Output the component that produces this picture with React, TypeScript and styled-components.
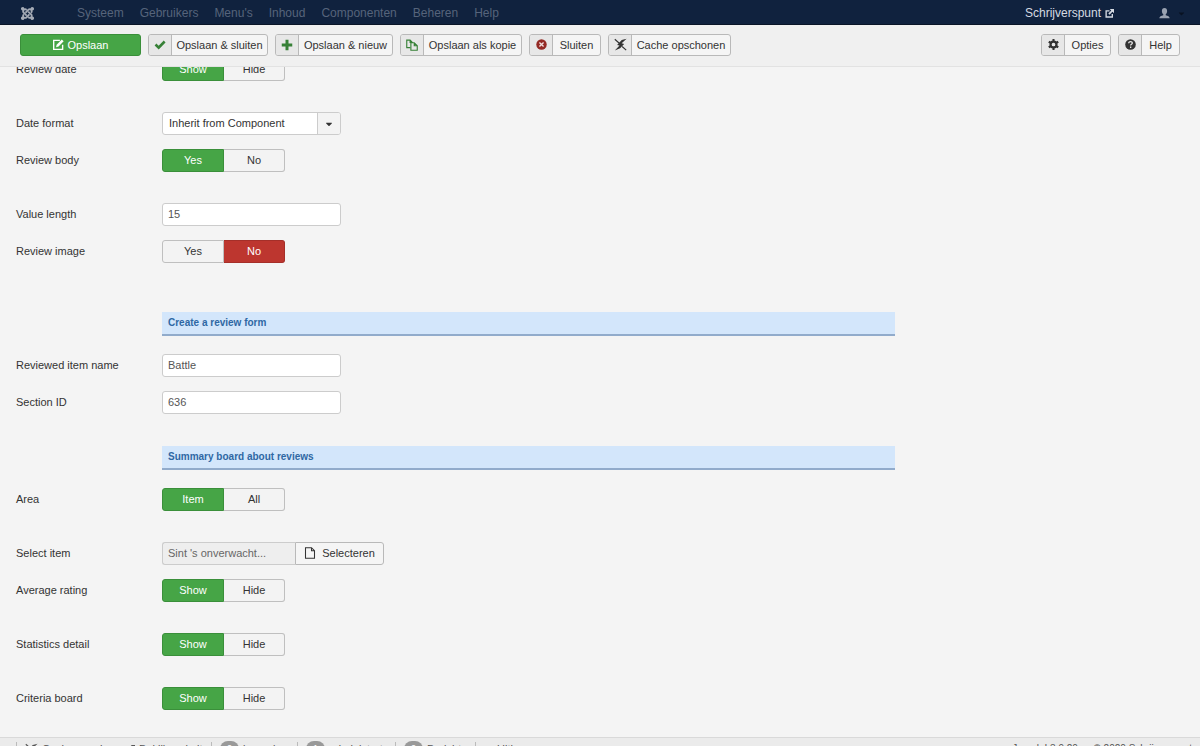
import React, { useId, useState } from "react";
import styled, { createGlobalStyle, css } from "styled-components";
import { FaCaretDown, FaJoomla, FaMinus } from "react-icons/fa";

const Global = createGlobalStyle`
  * { box-sizing: border-box; }
  html, body { margin: 0; height: 100%; overflow: hidden; background: #f4f4f4; }
  body, button, input, select {
    font-family: "Liberation Sans", Arial, sans-serif;
    font-size: 11px;
    line-height: 16px;
    color: #333;
  }
  a { color: inherit; text-decoration: none; }
  svg { flex: none; }
`;

const Navbar = styled.nav`
  position: relative;
  z-index: 2;
  display: flex;
  align-items: center;
  height: 25px;
  padding: 2px 14px 0 20px;
  background: #10223e;
  border-bottom: 1px solid #0a1527;
  color: #56647b;
  font-size: 12px;
`;

const Brand = styled.a`
  display: flex;
  width: 57px;
  color: #a4aab5;
`;

const Menu = styled.div`
  display: flex;
  flex: 1;
  gap: 16px;
`;

const SiteLink = styled.a`
  display: flex;
  align-items: center;
  gap: 4px;
  color: #d5dae2;
`;

const UserButton = styled.button`
  display: flex;
  align-items: center;
  gap: 7px;
  margin-left: 45px;
  padding: 0;
  border: 0;
  background: none;
  color: #98a1b0;
`;

const Toolbar = styled.div`
  position: relative;
  z-index: 1;
  display: flex;
  align-items: center;
  gap: 7px;
  height: 42px;
  padding: 0 20px 2px;
  background: #f0f0f0;
  border-bottom: 1px solid #e2e2e2;
`;

const Spacer = styled.div`
  flex: 1;
`;

const buttonBox = css`
  height: 22px;
  border: 1px solid #b9b9b9;
  border-radius: 3px;
  background: #f5f5f5;
  padding: 0;
`;

const ToolButton = styled.button<{ $width: number }>`
  ${buttonBox}
  display: flex;
  width: ${(p) => p.$width}px;
  overflow: hidden;
  white-space: nowrap;
`;

const ToolIcon = styled.span<{ $color: string }>`
  display: flex;
  align-items: center;
  justify-content: center;
  width: 23px;
  height: 20px;
  flex: none;
  color: ${(p) => p.$color};
  background: #e7e7e7;
  border-right: 1px solid #b9b9b9;
`;

const ToolText = styled.span`
  flex: 1;
  line-height: 20px;
  text-align: center;
`;

const SaveButton = styled.button`
  display: flex;
  align-items: center;
  justify-content: center;
  gap: 4px;
  width: 121px;
  height: 22px;
  padding: 0;
  border: 1px solid #3a8f3a;
  border-radius: 3px;
  background: #46a546;
  color: #fff;
`;

const Form = styled.form`
  display: flex;
  flex-direction: column;
  margin-top: -9px;
  padding: 0 16px;
`;

const Row = styled.div<{ $tall?: boolean }>`
  display: flex;
  align-items: center;
  height: 23px;
  margin-bottom: ${(p) => (p.$tall ? 31 : 14)}px;
`;

const labelStyle = css`
  width: 146px;
  padding-bottom: 2px;
  flex: none;
`;

const Label = styled.label`
  ${labelStyle}
`;

const GroupLabel = styled.span`
  ${labelStyle}
`;

const Heading = styled.h4`
  width: calc(63% - 3px);
  height: 24px;
  margin: 18px 0 18px 146px;
  padding: 0 6px;
  font-size: 10px;
  line-height: 22px;
  color: #2f68a4;
  background: #d3e6fb;
  border-bottom: 2px solid #91abcb;
`;

const TextInput = styled.input`
  width: 179px;
  height: 23px;
  padding: 0 5px 2px;
  border: 1px solid #ccc;
  border-radius: 3px;
  background: #fff;
  color: #555;
`;

const SelectBox = styled.div`
  position: relative;
  width: 179px;
  height: 23px;
`;

const Select = styled.select`
  appearance: none;
  width: 100%;
  height: 23px;
  padding: 0 28px 2px 6px;
  border: 1px solid #ccc;
  border-radius: 3px;
  background: #fff;
`;

const SelectArrow = styled.span`
  position: absolute;
  top: 1px;
  right: 1px;
  display: flex;
  align-items: center;
  justify-content: center;
  width: 23px;
  height: 21px;
  border-left: 1px solid #ccc;
  border-radius: 0 2px 2px 0;
  background: #f3f3f3;
  pointer-events: none;
`;

const Toggle = styled.div`
  display: grid;
  grid-template-columns: 62px 61px;
  height: 23px;
`;

const Option = styled.label<{ $tone: "off" | "yes" | "no" }>`
  display: flex;
  align-items: center;
  justify-content: center;
  padding-bottom: 2px;
  border: 1px solid #bfbfbf;
  background: #f3f3f3;
  &:first-child { border-radius: 3px 0 0 3px; }
  &:last-child { border-radius: 0 3px 3px 0; border-left-width: 0; }
  ${(p) => p.$tone === "yes" && css`background: #46a546; border-color: #3a8f3a; color: #fff;`}
  ${(p) => p.$tone === "no" && css`background: #bd362f; border-color: #a52f29; color: #fff;`}
`;

const HiddenRadio = styled.input`
  position: absolute;
  opacity: 0;
  width: 1px;
  height: 1px;
  margin: 0;
`;

const PickerInput = styled(TextInput)`
  width: 133px;
  border-radius: 3px 0 0 3px;
  border-right: 0;
  background: #eee;
  color: #666;
`;

const PickerButton = styled.button`
  ${buttonBox}
  display: flex;
  align-items: center;
  justify-content: center;
  gap: 6px;
  width: 89px;
  height: 23px;
  padding-bottom: 2px;
  border-radius: 0 3px 3px 0;
`;

const StatusBar = styled.footer`
  position: fixed;
  right: 0;
  bottom: -18px;
  left: 0;
  z-index: 1;
  display: flex;
  align-items: center;
  height: 27px;
  padding: 0 8px 4px 16px;
  background: #ebebeb;
  border-top: 1px solid #d9d9d9;
  color: #555;
  white-space: nowrap;
`;

const StatusItem = styled.a<{ $width: number; $plain?: boolean }>`
  display: flex;
  align-items: center;
  gap: 4px;
  width: ${(p) => p.$width}px;
  height: 14px;
  padding-left: 8px;
  border-left: 1px solid ${(p) => (p.$plain ? "transparent" : "#bbb")};
`;

const Badge = styled.span`
  width: 19px;
  height: 16px;
  border-radius: 8px;
  background: #999;
  color: #fff;
  font-size: 10px;
  line-height: 18px;
  text-align: center;
  flex: none;
`;

const Copyright = styled.span`
  font-size: 10px;
`;

const Glyph = ({ size, children }: { size: number; children: React.ReactNode }) => (
  <svg width={size} height={size} viewBox="0 0 16 16" fill="currentColor" aria-hidden="true">
    {children}
  </svg>
);

const EditIcon = () => (
  <Glyph size={11}>
    <path d="M10 2H1v13h13V8.5" fill="none" stroke="currentColor" strokeWidth="2" />
    <path d="M4.5 12l.8-3.8L12.8.7l2.7 2.7-7.4 7.5z" />
  </Glyph>
);
const CheckIcon = () => (
  <Glyph size={12}>
    <path d="M.8 8.6L3.2 6l3 3L13 2l2.4 2.500L6.300 14z" />
  </Glyph>
);
const PlusIcon = () => (
  <Glyph size={12}>
    <path d="M6 1h4v5h5v4h-5v5H6v-5H1V6h5z" />
  </Glyph>
);
const CopyIcon = () => (
  <Glyph size={12}>
    <path
      d="M5.500 11.500H1V1.500h4.500L8.500 4.500V5M5.500 1.500V4.500H8.500M6.500 5h4.500l4 4v6h-8.500zM11 5v4h4"
      fill="none"
      stroke="currentColor"
      strokeWidth="1.500"
    />
  </Glyph>
);
const CancelIcon = () => (
  <Glyph size={11}>
    <circle cx="8" cy="8" r="7.600" />
    <path d="M5 5l6 6M11 5l-6 6" stroke="#f0dede" strokeWidth="2" />
  </Glyph>
);
const CacheIcon = () => (
  <Glyph size={13}>
    <path d="M1 1.500l5.500 5M10 10.500l5 4.500" stroke="currentColor" strokeWidth="1.400" />
    <path d="M15.500 1L9.500 2.600 3.800 8.600l3 .6L1 15.500l6.500-2.800 5-5.400-3.100-.7z" />
  </Glyph>
);
const GearIcon = () => (
  <Glyph size={11}>
    <circle cx="8" cy="8" r="4.300" fill="none" stroke="currentColor" strokeWidth="3.200" />
    <path
      d="M8 0v3.500M8 12.500V16M1.100 4l3 1.800M11.900 10.200l3 1.800M14.900 4l-3 1.800M4.100 10.200l-3 1.800"
      stroke="currentColor"
      strokeWidth="3"
    />
  </Glyph>
);
const HelpIcon = () => (
  <Glyph size={11}>
    <circle cx="8" cy="8" r="7.700" />
    <path
      d="M5.400 6.300c0-3.600 5.400-3.300 5.200-.2C10.500 7.800 8.200 7.700 8.200 9.500M8.200 11v2"
      fill="none"
      stroke="#e7e7e7"
      strokeWidth="1.900"
    />
  </Glyph>
);
const FileIcon = () => (
  <Glyph size={12}>
    <path d="M2 1h8l4 4v10H2zM10 1v4h4" fill="none" stroke="currentColor" strokeWidth="1.400" />
  </Glyph>
);
const LinkIcon = () => (
  <Glyph size={9}>
    <path d="M8 3.200H2v11h11V9" fill="none" stroke="currentColor" strokeWidth="2.400" />
    <path d="M8.500 0H16v7.500l-2.700-2.700-5.200 5.200-2.200-2.200 5.200-5.200z" />
  </Glyph>
);
const UserIcon = () => (
  <Glyph size={11}>
    <path d="M8 0c2.500 0 3.800 1.700 3.800 4.200 0 2-.9 4-2 4.900v1.300c3.200.5 5.700 1.900 5.700 4.600H.5c0-2.700 2.500-4.100 5.700-4.600V9.100c-1.100-.9-2-2.900-2-4.900C4.200 1.700 5.500 0 8 0z" />
  </Glyph>
);

type ToolProps = { width: number; icon: React.ReactNode; color?: string; children: React.ReactNode };

const Tool = ({ width, icon, color = "#333", children }: ToolProps) => (
  <ToolButton type="button" $width={width}>
    <ToolIcon $color={color}>{icon}</ToolIcon>
    <ToolText>{children}</ToolText>
  </ToolButton>
);

type ToggleRowProps = { label: string; options: [string, string]; initial?: number };

const ToggleRow = ({ label, options, initial = 0 }: ToggleRowProps) => {
  const id = useId();
  const [selected, setSelected] = useState(initial);
  return (
    <Row $tall>
      <GroupLabel id={id}>{label}</GroupLabel>
      <Toggle role="radiogroup" aria-labelledby={id}>
        {options.map((text, i) => (
          <Option key={text} $tone={selected !== i ? "off" : i === 0 ? "yes" : "no"}>
            <HiddenRadio type="radio" name={id} checked={selected === i} onChange={() => setSelected(i)} />
            {text}
          </Option>
        ))}
      </Toggle>
    </Row>
  );
};

const InputRow = ({ label, value }: { label: string; value: string }) => {
  const id = useId();
  return (
    <Row>
      <Label htmlFor={id}>{label}</Label>
      <TextInput id={id} type="text" defaultValue={value} />
    </Row>
  );
};

const menuItems = ["Systeem", "Gebruikers", "Menu's", "Inhoud", "Componenten", "Beheren", "Help"];

export default function App() {
  return (
    <>
      <Global />
      <Navbar>
        <Brand href="#" aria-label="Joomla">
          <FaJoomla size={15} />
        </Brand>
        <Menu>
          {menuItems.map((item) => (
            <a key={item} href="#">
              {item}
            </a>
          ))}
        </Menu>
        <SiteLink href="#">
          Schrijverspunt
          <LinkIcon />
        </SiteLink>
        <UserButton type="button" aria-label="Gebruikersmenu">
          <UserIcon />
          <FaCaretDown size={9} color="#081222" />
        </UserButton>
      </Navbar>

      <Toolbar>
        <SaveButton type="button">
          <EditIcon />
          Opslaan
        </SaveButton>
        <Tool width={120} color="#378137" icon={<CheckIcon />}>Opslaan &amp; sluiten</Tool>
        <Tool width={118} color="#378137" icon={<PlusIcon />}>Opslaan &amp; nieuw</Tool>
        <Tool width={122} color="#378137" icon={<CopyIcon />}>Opslaan als kopie</Tool>
        <Tool width={72} color="#942a25" icon={<CancelIcon />}>Sluiten</Tool>
        <Tool width={123} icon={<CacheIcon />}>Cache opschonen</Tool>
        <Spacer />
        <Tool width={70} icon={<GearIcon />}>Opties</Tool>
        <Tool width={62} icon={<HelpIcon />}>Help</Tool>
      </Toolbar>

      <Form>
        <ToggleRow label="Review date" options={["Show", "Hide"]} />
        <Row>
          <Label htmlFor="date-format">Date format</Label>
          <SelectBox>
            <Select id="date-format">
              <option>Inherit from Component</option>
            </Select>
            <SelectArrow>
              <FaCaretDown size={10} />
            </SelectArrow>
          </SelectBox>
        </Row>
        <ToggleRow label="Review body" options={["Yes", "No"]} />
        <InputRow label="Value length" value="15" />
        <ToggleRow label="Review image" options={["Yes", "No"]} initial={1} />

        <Heading>Create a review form</Heading>
        <InputRow label="Reviewed item name" value="Battle" />
        <InputRow label="Section ID" value="636" />

        <Heading>Summary board about reviews</Heading>
        <ToggleRow label="Area" options={["Item", "All"]} />
        <Row>
          <Label htmlFor="select-item">Select item</Label>
          <PickerInput id="select-item" type="text" readOnly value="Sint 's onverwacht..." />
          <PickerButton type="button">
            <FileIcon />
            Selecteren
          </PickerButton>
        </Row>
        <ToggleRow label="Average rating" options={["Show", "Hide"]} />
        <ToggleRow label="Statistics detail" options={["Show", "Hide"]} />
        <ToggleRow label="Criteria board" options={["Show", "Hide"]} />
      </Form>

      <StatusBar>
        <StatusItem href="#" $width={101}>
          <CacheIcon />
          Cache opschonen
        </StatusItem>
        <StatusItem href="#" $width={94} $plain>
          <LinkIcon />
          Bekijk website
        </StatusItem>
        <StatusItem href="#" $width={86}>
          <Badge>0</Badge>
          bezoekers
        </StatusItem>
        <StatusItem href="#" $width={98}>
          <Badge>1</Badge>
          administrator
        </StatusItem>
        <StatusItem href="#" $width={80}>
          <Badge>0</Badge>
          Berichten
        </StatusItem>
        <StatusItem href="#" $width={80}>
          <FaMinus size={9} />
          Uitloggen
        </StatusItem>
        <Spacer />
        <Copyright>Joomla! 3.9.20 — © 2020 Schrijverspunt</Copyright>
      </StatusBar>
    </>
  );
}
